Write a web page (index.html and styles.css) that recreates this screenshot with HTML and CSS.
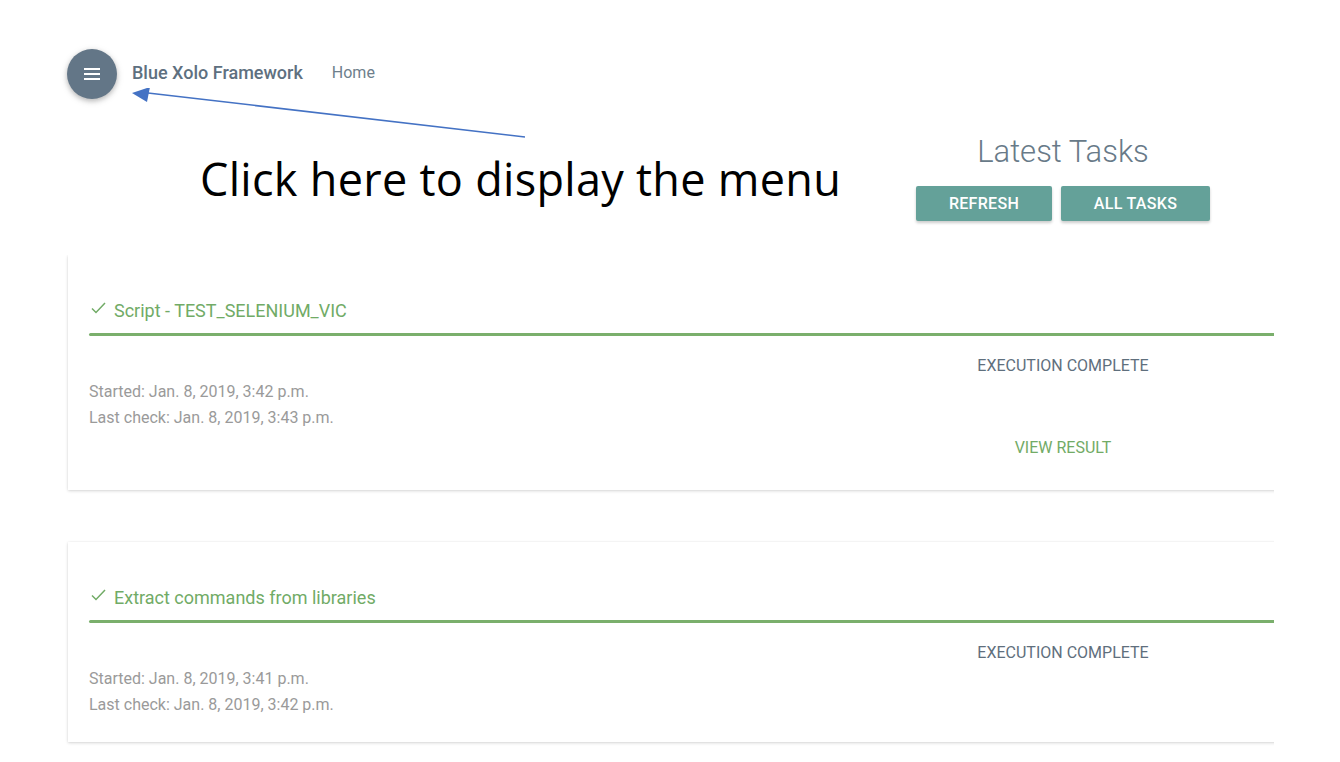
FILE: index.html
```html
<!DOCTYPE html>
<html>
<head>
<meta charset="utf-8">
<link rel="stylesheet" href="styles.css">
</head>
<body>
<nav class="nav">
  <button class="menu-btn" aria-label="menu">
    <svg width="18" height="14" viewBox="0 0 18 14"><rect x="1" y="1" width="16" height="2" fill="#fff"/><rect x="1" y="6" width="16" height="2" fill="#fff"/><rect x="1" y="11" width="16" height="2" fill="#fff"/></svg>
  </button>
  <span class="brand">Blue Xolo Framework</span>
  <span class="nav-link">Home</span>
</nav>

<svg class="arrow" width="420" height="70" viewBox="0 0 420 70">
  <line x1="395" y1="49" x2="18" y2="5" stroke="#4472c4" stroke-width="1.5"/>
  <polygon points="2,3 20,-3 17,12" fill="#4472c4" transform="translate(0,2)"/>
</svg>

<section class="top">
  <div class="callout">Click here to display the menu</div>
  <div class="tasks-head">
    <h1 class="tasks-title">Latest Tasks</h1>
    <div class="btns">
      <button class="btn btn-refresh">REFRESH</button>
      <button class="btn btn-all">ALL TASKS</button>
    </div>
  </div>
</section>

<main class="cards">
  <article class="card">
    <div class="card-title"><svg class="check" width="15" height="12" viewBox="0 0 15 12"><polyline points="1,6.5 5,10.5 14,1" fill="none" stroke="#71ab66" stroke-width="1.5"/></svg>Script - TEST_SELENIUM_VIC</div>
    <div class="rule"></div>
    <div class="card-body">
      <div class="times">
        <div>Started: Jan. 8, 2019, 3:42 p.m.</div>
        <div>Last check: Jan. 8, 2019, 3:43 p.m.</div>
      </div>
      <div class="status">
        <div class="status-text">EXECUTION COMPLETE</div>
        <div class="view">VIEW RESULT</div>
      </div>
    </div>
  </article>

  <article class="card">
    <div class="card-title"><svg class="check" width="15" height="12" viewBox="0 0 15 12"><polyline points="1,6.5 5,10.5 14,1" fill="none" stroke="#71ab66" stroke-width="1.5"/></svg>Extract commands from libraries</div>
    <div class="rule"></div>
    <div class="card-body">
      <div class="times">
        <div>Started: Jan. 8, 2019, 3:41 p.m.</div>
        <div>Last check: Jan. 8, 2019, 3:42 p.m.</div>
      </div>
      <div class="status">
        <div class="status-text">EXECUTION COMPLETE</div>
      </div>
    </div>
  </article>
</main>
</body>
</html>
```
FILE: styles.css
```css
html, body {
  margin: 0;
  padding: 0;
  background: #fff;
  font-family: Roboto, "Liberation Sans", sans-serif;
  overflow: hidden;
}

.nav {
  display: flex;
  align-items: center;
  height: 54px;
  padding: 48px 0 0 67px;
  box-sizing: content-box;
}

.menu-btn {
  width: 50px;
  height: 50px;
  border-radius: 50%;
  border: none;
  background: #637687;
  box-shadow: 0 2px 5px rgba(0,0,0,0.22), 0 2px 8px rgba(0,0,0,0.1);
  display: flex;
  align-items: center;
  justify-content: center;
  padding: 0;
  margin-top: -2px;
}

.brand {
  margin-left: 15px;
  font-size: 18px;
  font-weight: 500;
  color: #5e7080;
  margin-top: -5px;
}

.nav-link {
  margin-left: 29px;
  font-size: 16px;
  color: #6e7f8c;
  margin-top: -5px;
}

.arrow {
  position: absolute;
  left: 130px;
  top: 88px;
}

.top {
  display: flex;
  width: 1274px;
  height: 153px;
}

.callout {
  margin-left: 200px;
  margin-top: 46px;
  font-family: "Open Sans", "Noto Sans", sans-serif;
  font-size: 45px;
  line-height: 62px;
  color: #000;
  letter-spacing: 0.3px;
  white-space: nowrap;
  flex: 1;
}

.tasks-head {
  width: 422px;
  display: flex;
  flex-direction: column;
  align-items: center;
}

.tasks-title {
  margin: 31px 0 0;
  font-size: 31px;
  font-weight: 300;
  line-height: 38px;
  color: #687a88;
}

.btns {
  display: flex;
  gap: 9px;
  margin-top: 15px;
}

.btn {
  height: 35px;
  border: none;
  border-radius: 2px;
  background: #64a199;
  color: #fff;
  font-family: Roboto, sans-serif;
  font-size: 16px;
  font-weight: 500;
  letter-spacing: 0.3px;
  box-shadow: 0 2px 3px rgba(0,0,0,0.2);
  padding: 0;
}

.btn-refresh { width: 136px; }
.btn-all { width: 149px; }

.cards {
  width: 1206px;
  padding: 0 0 20px 8px;
  margin-left: 60px;
  overflow: hidden;
  display: flex;
  flex-direction: column;
  gap: 52px;
}

.card {
  width: 1240px;
  flex-shrink: 0;
  background: #fff;
  box-shadow: 0 1px 3px rgba(0,0,0,0.16), 0 0 2px rgba(0,0,0,0.05);
  padding: 0 0 24px 21px;
  box-sizing: border-box;
}

.card-title {
  padding-top: 44px;
  height: 24px;
  line-height: 24px;
  font-size: 18px;
  color: #71ab66;
  display: flex;
  align-items: center;
}

.check {
  margin-left: 2px;
  margin-right: 8px;
  margin-top: -6px;
}

.rule {
  margin-top: 10px;
  height: 3px;
  background: #7aaf6c;
  border-radius: 2px 0 0 2px;
}

.card-body {
  display: flex;
  padding-top: 16px;
}

.times {
  flex: 1;
  padding-top: 27px;
  font-size: 16px;
  line-height: 26px;
  color: #9a9a9a;
}

.status {
  width: 422px;
  margin-right: 34px;
  display: flex;
  flex-direction: column;
  align-items: center;
}

.status-text {
  font-size: 16px;
  line-height: 26px;
  margin-top: 1px;
  color: #5f6f7d;
}

.view {
  margin-top: 51px;
  height: 36px;
  line-height: 36px;
  font-size: 16px;
  color: #72ab66;
}
```
